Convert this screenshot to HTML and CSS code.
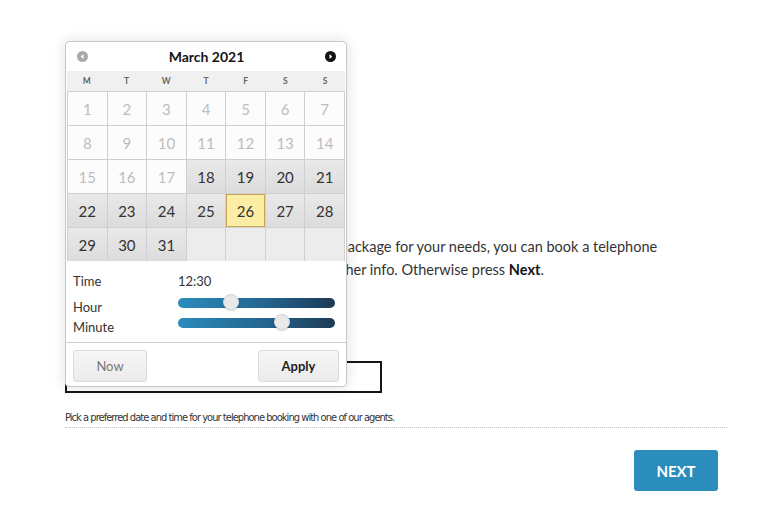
FILE: index.html
```html
<!DOCTYPE html>
<html lang="en">
<head>
    <meta charset="UTF-8">
    <meta name="viewport" content="width=device-width, initial-scale=1.0">
    <title>Book a call</title>
    <link rel="stylesheet" href="styles.css">
</head>
<body>
    <div class="page">
        <p class="intro">
            <span class="lead">If you are unsure which is the most suitable</span> package for your needs, you can book a telephone<br>
            call with one of our expert agents to get further info. Otherwise press <b>Next</b>.
        </p>

        <div class="field">
            <input type="text" class="date-input" id="bookingDate">
            <p class="help">Pick a preferred date and time for your telephone booking with one of our agents.</p>
        </div>

        <div class="actions">
            <button class="next">NEXT</button>
        </div>
    </div>

    <!-- date picker popup -->
    <div class="picker">
        <div class="picker-head">
            <span class="nav prev">
                <svg width="11" height="11" viewBox="0 0 11 11"><circle cx="5.5" cy="5.5" r="5.5" fill="#a9a9a9"/><path d="M6.5 3 L3.8 5.5 L6.5 8 Z" fill="#fff"/></svg>
            </span>
            <span class="title">March 2021</span>
            <span class="nav next-month">
                <svg width="11" height="11" viewBox="0 0 11 11"><circle cx="5.5" cy="5.5" r="5.5" fill="#111"/><path d="M4.5 3 L7.2 5.5 L4.5 8 Z" fill="#fff"/></svg>
            </span>
        </div>
        <div class="weekdays">
            <span>M</span><span>T</span><span>W</span><span>T</span><span>F</span><span>S</span><span>S</span>
        </div>
        <div class="days">
            <span class="off">1</span><span class="off">2</span><span class="off">3</span><span class="off">4</span><span class="off">5</span><span class="off">6</span><span class="off">7</span>
            <span class="off">8</span><span class="off">9</span><span class="off">10</span><span class="off">11</span><span class="off">12</span><span class="off">13</span><span class="off">14</span>
            <span class="off">15</span><span class="off">16</span><span class="off">17</span><span>18</span><span>19</span><span>20</span><span>21</span>
            <span>22</span><span>23</span><span>24</span><span>25</span><span class="active">26</span><span>27</span><span>28</span>
            <span>29</span><span>30</span><span>31</span><span class="empty"></span><span class="empty"></span><span class="empty"></span><span class="empty"></span>
        </div>
        <div class="time">
            <span class="lbl top">Time</span><span class="val">12:30</span>
            <span class="lbl">Hour</span>
            <div class="slider"><span class="thumb" style="left: 34%"></span></div>
            <span class="lbl">Minute</span>
            <div class="slider"><span class="thumb" style="left: 66%"></span></div>
        </div>
        <div class="picker-foot">
            <button class="btn now">Now</button>
            <button class="btn apply">Apply</button>
        </div>
    </div>
</body>
</html>
```

FILE: styles.css
```css
/* base */
body {
    margin: 0;
    font-family: Lato, 'Open Sans', sans-serif;
    color: #333;
    background-color: #fff;
}

.page {
    width: 662px;
    padding: 235px 0 0 65px;
}

.intro {
    margin: 0;
    font-size: 14.5px;
    line-height: 23px;
    white-space: nowrap;
}

.intro .lead {
    word-spacing: -0.4px;
}

.intro b {
    color: #151515;
}

/* form field */
.field {
    margin-top: 80px;
}

.date-input {
    display: block;
    box-sizing: border-box;
    width: 317px;
    height: 32px;
    margin: 0;
    border: 2px solid #151515;
    border-radius: 0;
    background: #fff;
}

.help {
    margin: 17px 0 0;
    padding-bottom: 1px;
    font-family: 'DejaVu Sans Condensed', 'Liberation Sans Narrow', Lato, sans-serif;
    font-stretch: condensed;
    font-size: 11px;
    letter-spacing: -0.95px;
    line-height: 16px;
    color: #333;
    border-bottom: 1px dotted #c4c4c4;
}

.actions {
    display: flex;
    justify-content: flex-end;
    margin-top: 22px;
    padding-right: 9px;
}

.next {
    width: 84px;
    height: 41px;
    border: none;
    border-radius: 3px;
    background-color: #2a8dbc;
    color: #fff;
    font-family: Lato, sans-serif;
    font-weight: bold;
    font-size: 15px;
}

/* date picker popup */
.picker {
    position: absolute;
    left: 65px;
    top: 41px;
    width: 280px;
    border: 1px solid #c8c8c8;
    border-radius: 4px;
    background: #fff;
    box-shadow: 0 0 14px rgba(0,0,0,0.13);
}

.picker-head {
    display: flex;
    align-items: center;
    height: 29px;
    padding: 0 10px 0 11px;
}

.picker-head .title {
    flex: 1;
    text-align: center;
    font-weight: bold;
    font-size: 14px;
    color: #151515;
}

.nav {
    display: flex;
}

.weekdays {
    display: grid;
    grid-template-columns: repeat(7, 1fr);
    height: 20px;
    margin: 0 1px;
    background: #f0f0f0;
    border-bottom: 1px solid #cfcfcf;
    font-size: 8.5px;
    font-weight: bold;
    color: #666;
    line-height: 20px;
    text-align: center;
}

.days {
    display: grid;
    grid-template-columns: repeat(7, 1fr);
    grid-auto-rows: 33px;
    gap: 1px;
    margin: 0 1px;
    padding: 0 1px;
    background: #cfcfcf;
}

.days span {
    display: flex;
    align-items: center;
    justify-content: center;
    font-size: 15px;
    color: #333;
    background: linear-gradient(#e9e9e9, #dcdcdc);
}

.days .off {
    background: #fcfcfc;
    color: #bdbdbd;
}

.days .empty {
    background: #ececec;
}

.days .active {
    background: #fbeea4;
    box-shadow: inset 0 0 0 1px #c9a455;
}

/* time section */
.time {
    display: grid;
    grid-template-columns: 105px 157px;
    grid-template-rows: 26px 20px 20px;
    padding: 10px 0 5px 7px;
    font-size: 13px;
    color: #333;
    line-height: 20px;
    border-bottom: 1px solid #ccc;
}

.time .top,
.time .val {
    height: 20px;
}

.slider {
    position: relative;
    height: 10px;
    margin-top: 1px;
    border-radius: 5px;
    background: linear-gradient(to right, #2a8cbb, #24658f 55%, #1d3a55);
}

.thumb {
    position: absolute;
    top: -4px;
    width: 16px;
    height: 16px;
    margin-left: -8px;
    border-radius: 50%;
    background: #e9e9e9;
    border: 1px solid #d6d6d6;
    box-sizing: border-box;
    box-shadow: 0 1px 2px rgba(0,0,0,0.15);
}

.picker-foot {
    display: flex;
    justify-content: space-between;
    padding: 7px 7px 4px;
}

.btn {
    height: 32px;
    border: 1px solid #dcdcdc;
    border-radius: 3px;
    background: linear-gradient(#f6f6f6, #ebebeb);
    font-family: Lato, sans-serif;
    font-size: 13px;
}

.btn.now {
    width: 74px;
    color: #777;
}

.btn.apply {
    width: 81px;
    color: #222;
    font-weight: bold;
}
```
